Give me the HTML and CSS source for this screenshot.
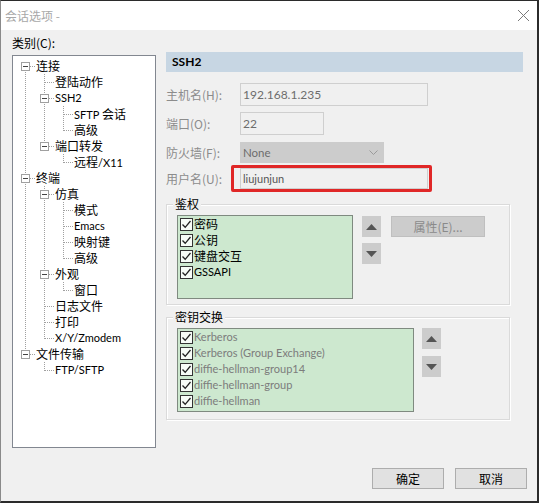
FILE: index.html
```html
<!DOCTYPE html>
<html lang="zh">
<head>
<meta charset="utf-8">
<title>会话选项</title>
<link rel="stylesheet" href="styles.css">
</head>
<body>
<div class="window">
  <div class="titlebar">
    <span class="title">会话选项 -</span>
    <svg class="close" width="13" height="13" viewBox="0 0 13 13"><path d="M1 1L12 12M12 1L1 12" stroke="#7a7a7a" stroke-width="1" fill="none"/></svg>
  </div>
  <div class="main">
    <div class="left">
      <div class="cat-label">类别(C):</div>
      <div class="tree">
        <div class="row"><span class="c f"><span class="box"></span></span><span class="lbl">连接</span></div>
        <div class="row"><span class="c v"></span><span class="c t"></span><span class="lbl">登陆动作</span></div>
        <div class="row"><span class="c v"></span><span class="c t"><span class="box"></span></span><span class="lbl en">SSH2</span></div>
        <div class="row"><span class="c v"></span><span class="c v"></span><span class="c t"></span><span class="lbl"><span class="en">SFTP</span> 会话</span></div>
        <div class="row"><span class="c v"></span><span class="c v"></span><span class="c l"></span><span class="lbl">高级</span></div>
        <div class="row"><span class="c v"></span><span class="c l"><span class="box"></span></span><span class="lbl">端口转发</span></div>
        <div class="row"><span class="c v"></span><span class="c"></span><span class="c l"></span><span class="lbl">远程<span class="en">/X11</span></span></div>
        <div class="row"><span class="c t"><span class="box"></span></span><span class="lbl">终端</span></div>
        <div class="row"><span class="c v"></span><span class="c t"><span class="box"></span></span><span class="lbl">仿真</span></div>
        <div class="row"><span class="c v"></span><span class="c v"></span><span class="c t"></span><span class="lbl">模式</span></div>
        <div class="row"><span class="c v"></span><span class="c v"></span><span class="c t"></span><span class="lbl en">Emacs</span></div>
        <div class="row"><span class="c v"></span><span class="c v"></span><span class="c t"></span><span class="lbl">映射键</span></div>
        <div class="row"><span class="c v"></span><span class="c v"></span><span class="c l"></span><span class="lbl">高级</span></div>
        <div class="row"><span class="c v"></span><span class="c t"><span class="box"></span></span><span class="lbl">外观</span></div>
        <div class="row"><span class="c v"></span><span class="c v"></span><span class="c l"></span><span class="lbl">窗口</span></div>
        <div class="row"><span class="c v"></span><span class="c t"></span><span class="lbl">日志文件</span></div>
        <div class="row"><span class="c v"></span><span class="c t"></span><span class="lbl">打印</span></div>
        <div class="row"><span class="c v"></span><span class="c l"></span><span class="lbl en">X/Y/Zmodem</span></div>
        <div class="row"><span class="c l"><span class="box"></span></span><span class="lbl">文件传输</span></div>
        <div class="row"><span class="c"></span><span class="c l"></span><span class="lbl en">FTP/SFTP</span></div>
      </div>
    </div>
    <div class="right">
      <div class="header">SSH2</div>
      <div class="frow r-host"><span class="flabel">主机名(H):</span><div class="input w-host">192.168.1.235</div></div>
      <div class="frow r-port"><span class="flabel">端口(O):</span><div class="input w-port">22</div></div>
      <div class="frow r-fw"><span class="flabel">防火墙(F):</span><div class="select">None<svg width="9" height="6" viewBox="0 0 9 6"><path d="M0.5 0.5L4.5 4.5L8.5 0.5" stroke="#9a9a9a" fill="none"/></svg></div></div>
      <div class="frow r-user"><span class="flabel">用户名(U):</span><div class="redmark"><div class="input w-user">liujunjun</div></div></div>

      <div class="group g1">
        <div class="gtitle">鉴权</div>
        <div class="gbody">
          <div class="list l1">
            <div class="item"><span class="chk"><svg width="11" height="11" viewBox="0 0 11 11"><path d="M1.5 5.5L4.2 8.3L9.5 2" stroke="#222" stroke-width="1.3" fill="none"/></svg></span>密码</div>
            <div class="item"><span class="chk"><svg width="11" height="11" viewBox="0 0 11 11"><path d="M1.5 5.5L4.2 8.3L9.5 2" stroke="#222" stroke-width="1.3" fill="none"/></svg></span>公钥</div>
            <div class="item"><span class="chk"><svg width="11" height="11" viewBox="0 0 11 11"><path d="M1.5 5.5L4.2 8.3L9.5 2" stroke="#222" stroke-width="1.3" fill="none"/></svg></span>键盘交互</div>
            <div class="item en"><span class="chk"><svg width="11" height="11" viewBox="0 0 11 11"><path d="M1.5 5.5L4.2 8.3L9.5 2" stroke="#222" stroke-width="1.3" fill="none"/></svg></span>GSSAPI</div>
          </div>
          <div class="arrows a1">
            <div class="abtn"><svg width="11" height="6" viewBox="0 0 11 6"><path d="M0 6L5.5 0L11 6Z" fill="#555"/></svg></div>
            <div class="abtn"><svg width="11" height="6" viewBox="0 0 11 6"><path d="M0 0L11 0L5.5 6Z" fill="#555"/></svg></div>
          </div>
          <div class="propbtn">属性(E)...</div>
        </div>
      </div>

      <div class="group g2">
        <div class="gtitle">密钥交换</div>
        <div class="gbody">
          <div class="list l2 en">
            <div class="item"><span class="chk"><svg width="11" height="11" viewBox="0 0 11 11"><path d="M1.5 5.5L4.2 8.3L9.5 2" stroke="#222" stroke-width="1.3" fill="none"/></svg></span>Kerberos</div>
            <div class="item"><span class="chk"><svg width="11" height="11" viewBox="0 0 11 11"><path d="M1.5 5.5L4.2 8.3L9.5 2" stroke="#222" stroke-width="1.3" fill="none"/></svg></span>Kerberos (Group Exchange)</div>
            <div class="item"><span class="chk"><svg width="11" height="11" viewBox="0 0 11 11"><path d="M1.5 5.5L4.2 8.3L9.5 2" stroke="#222" stroke-width="1.3" fill="none"/></svg></span>diffie-hellman-group14</div>
            <div class="item"><span class="chk"><svg width="11" height="11" viewBox="0 0 11 11"><path d="M1.5 5.5L4.2 8.3L9.5 2" stroke="#222" stroke-width="1.3" fill="none"/></svg></span>diffie-hellman-group</div>
            <div class="item"><span class="chk"><svg width="11" height="11" viewBox="0 0 11 11"><path d="M1.5 5.5L4.2 8.3L9.5 2" stroke="#222" stroke-width="1.3" fill="none"/></svg></span>diffie-hellman</div>
          </div>
          <div class="arrows a2">
            <div class="abtn"><svg width="11" height="6" viewBox="0 0 11 6"><path d="M0 6L5.5 0L11 6Z" fill="#555"/></svg></div>
            <div class="abtn"><svg width="11" height="6" viewBox="0 0 11 6"><path d="M0 0L11 0L5.5 6Z" fill="#555"/></svg></div>
          </div>
        </div>
      </div>
    </div>
  </div>
  <div class="footer">
    <div class="btn">确定</div>
    <div class="btn">取消</div>
  </div>
</div>
</body>
</html>
```

FILE: styles.css
```css
html, body {
  margin: 0;
  padding: 0;
  background: #f0f0f0;
}
body {
  font-family: "Noto Sans CJK SC", "Noto Sans", sans-serif;
  font-size: 12px;
  line-height: 16px;
  color: #000;
}
.en {
  font-family: Lato, "Noto Sans CJK SC", sans-serif;
  font-size: 11px;
}
.window {
  --dotv: repeating-linear-gradient(to bottom, #a0a0a0 0 1px, transparent 1px 2px);
  --doth: repeating-linear-gradient(to right, #a0a0a0 0 1px, transparent 1px 2px);
  width: 539px;
  height: 503px;
  box-sizing: border-box;
  border-top: 1px solid #2b2b2b;
  border-right: 2px solid #2b2b2b;
  border-bottom: 2px solid #2b2b2b;
  border-left: 1px solid #8a8a8a;
  background: #f0f0f0;
  display: flex;
  flex-direction: column;
}
.titlebar {
  height: 29px;
  flex: none;
  background: #fff;
  display: flex;
  align-items: center;
  justify-content: space-between;
  padding: 0 7px 0 4px;
  color: #a8a8a8;
}
.close { display: block; }
.main {
  height: 418px;
  flex: none;
  display: flex;
}
.left {
  padding-left: 11px;
  width: 144px;
  display: flex;
  flex-direction: column;
}
.cat-label {
  margin-top: 5px;
  height: 16px;
}
.tree {
  margin-top: 4px;
  flex: 1;
  background: #fff;
  border: 1px solid #828790;
  padding: 2px 0 0 3px;
}
.row {
  display: flex;
  height: 16px;
  align-items: center;
  white-space: nowrap;
}
.c {
  width: 19px;
  height: 16px;
  flex: none;
  display: flex;
  justify-content: center;
  align-items: flex-start;
}
.v { background: var(--dotv) 9px 0 / 1px 16px no-repeat; }
.t { background: var(--dotv) 9px 0 / 1px 16px no-repeat, var(--doth) 10px 8px / 9px 1px no-repeat; }
.l { background: var(--dotv) 9px 0 / 1px 9px no-repeat, var(--doth) 10px 8px / 9px 1px no-repeat; }
.f { background: var(--dotv) 9px 8px / 1px 8px no-repeat, var(--doth) 10px 8px / 9px 1px no-repeat; }
.box {
  width: 9px;
  height: 9px;
  margin-top: 4px;
  box-sizing: border-box;
  border: 1px solid #a0a0a0;
  background: linear-gradient(#444, #444) center / 5px 1px no-repeat, #fff;
}
.lbl { margin-left: 1px; }

.right {
  margin-left: 10px;
  width: 357px;
  padding-top: 22px;
}
.header {
  height: 20px;
  line-height: 20px;
  background: #c7d6e3;
  font-family: Lato, sans-serif;
  font-weight: bold;
  font-size: 12px;
  padding-left: 6px;
}
.frow {
  display: flex;
  align-items: center;
}
.flabel {
  width: 74px;
  flex: none;
  color: #8c8c8c;
}
.r-host { margin-top: 11px; }
.r-port { margin-top: 6px; }
.r-fw { margin-top: 7px; }
.r-user { margin-top: 2px; }
.input {
  box-sizing: border-box;
  height: 23px;
  line-height: 21px;
  border: 1px solid #cfcfcf;
  background: #f0f0f0;
  color: #6d6d6d;
  padding-left: 2px;
  font-family: Lato, sans-serif;
  font-size: 12px;
}
.w-host { width: 188px; }
.w-port { width: 84px; }
.w-user { width: 188px; height: 21px; line-height: 19px; color: #555; font-size: 11px; }
.select {
  box-sizing: border-box;
  width: 144px;
  height: 21px;
  background: #cccccc;
  color: #6d6d6d;
  padding: 0 6px 0 3px;
  display: flex;
  align-items: center;
  justify-content: space-between;
  font-family: Lato, sans-serif;
  font-size: 11.5px;
}
.redmark {
  margin-left: -9px;
  box-sizing: border-box;
  width: 201px;
  height: 27px;
  border: 3px solid #e02727;
  border-radius: 2px;
  padding-left: 6px;
}
.group {
  width: 344px;
  box-sizing: border-box;
  border: 1px solid #dadada;
  box-shadow: inset 1px 1px 0 #fff, 1px 1px 0 #fff;
}
.g1 { margin-top: 12px; padding-bottom: 5px; }
.g2 { margin-top: 12px; padding-bottom: 7px; }
.gtitle {
  margin-top: -9px;
  margin-left: 6px;
  padding: 0 2px;
  width: fit-content;
  background: #f0f0f0;
  line-height: 16px;
}
.gbody {
  display: flex;
  align-items: flex-start;
  padding-left: 10px;
  margin-top: 3px;
}
.list {
  box-sizing: border-box;
  height: 84px;
  border: 1px solid #7f8a80;
  background: #cde8cf;
  flex: none;
}
.l1 { width: 176px; }
.l2 { width: 237px; color: #7c7c7c; }
.item {
  height: 16px;
  display: flex;
  align-items: center;
  white-space: nowrap;
}
.chk {
  width: 13px;
  height: 13px;
  box-sizing: border-box;
  border: 1px solid #333;
  background: #f7fcf7;
  margin-left: 2px;
  margin-right: 1px;
  display: flex;
  align-items: center;
  justify-content: center;
  flex: none;
}
.chk svg { display: block; }
.arrows {
  display: flex;
  flex-direction: column;
  flex: none;
}
.a1 { margin-left: 9px; margin-top: 1px; gap: 6px; }
.a2 { margin-left: 8px; margin-top: 0; gap: 7px; }
.abtn {
  width: 19px;
  height: 21px;
  background: #cccccc;
  display: flex;
  align-items: center;
  justify-content: center;
}
.propbtn {
  margin-left: 10px;
  margin-top: 1px;
  width: 94px;
  height: 21px;
  box-sizing: border-box;
  border: 1px solid #bfbfbf;
  background: #cccccc;
  color: #8a8a8a;
  text-align: center;
  line-height: 19px;
}
.footer {
  display: flex;
  justify-content: flex-end;
  gap: 11px;
  padding-top: 20px;
  padding-right: 10px;
}
.btn {
  width: 72px;
  height: 21px;
  box-sizing: border-box;
  border: 1px solid #adadad;
  background: #e1e1e1;
  text-align: center;
  line-height: 19px;
}
```
